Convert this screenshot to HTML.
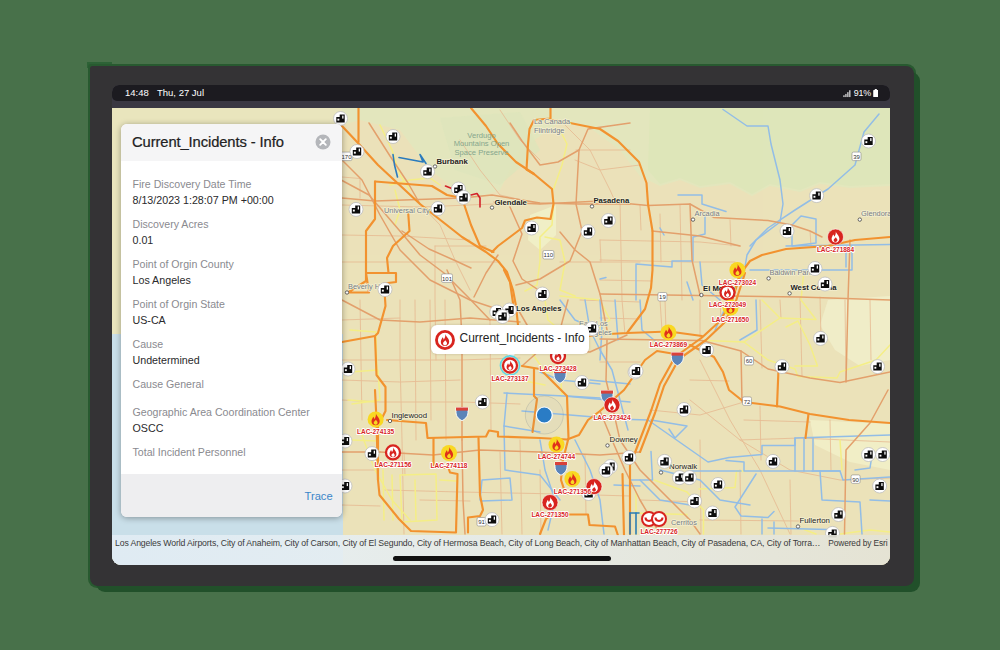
<!DOCTYPE html>
<html><head><meta charset="utf-8"><title>Current_Incidents - Info</title>
<style>
html,body{margin:0;padding:0}
body{width:1000px;height:650px;position:relative;overflow:hidden;background:#48714a;font-family:"Liberation Sans",sans-serif;}
.abs{position:absolute}
#box{left:87px;top:62px;width:848px;height:530px;background:#466e48}
#shadow{left:96px;top:72px;width:824px;height:519.7px;border-radius:3px 9px 9px 9px;background:#21502a}
#halo{left:88px;top:64px;width:828px;height:524px;border-radius:3px 9px 9px 9px;background:#285a30}
#halo2{left:87px;top:61.5px;width:25px;height:6px;background:#2d6236}
#frame{left:90.3px;top:66.3px;width:823.4px;height:519.5px;border-radius:2.5px 8px 8.5px 8px;background:#343335}
#screen{left:112px;top:85px;width:778px;height:480px;border-radius:7px 7px 9px 9px;overflow:hidden;background:#3a3842}
#status{left:0;top:0;width:778px;height:15.5px;background:#1c1b20;border-radius:7px 7px 5px 5px;color:#fff;font-size:9.5px;line-height:16px}
#map{left:0;top:23px;width:778px;height:457px;background:#ebe3bb;overflow:hidden}
#panel{left:8.5px;top:38.5px;width:221px;height:393px;border-radius:6px;background:#fff;box-shadow:0 1px 6px rgba(0,0,0,.35);overflow:hidden}
#phead{left:0;top:0;width:221px;height:37.5px;background:#f5f5f6}
#pfoot{left:0;top:350px;width:221px;height:43px;background:#eeeef0}
.lab{position:absolute;left:12px;font-size:10.6px;color:#8a8a8f;white-space:nowrap;line-height:13px}
.val{position:absolute;left:12px;font-size:10.7px;color:#2a2a2c;white-space:nowrap;line-height:13px}
#title{left:11.5px;top:9px;font-size:14.75px;line-height:18px;color:#222;white-space:nowrap;-webkit-text-stroke:0.22px #222;letter-spacing:-0.1px}
#callout{left:318.5px;top:240px;width:158px;height:28.5px;border-radius:6px;background:#fff;box-shadow:0 0 3px rgba(0,0,0,.18)}
#ctext{left:29px;top:6px;font-size:11.97px;line-height:15px;color:#222;white-space:nowrap}
#attr{left:0;top:450px;width:778px;height:30px;background:linear-gradient(90deg,rgba(225,236,244,.92) 0%,rgba(230,238,242,.9) 30%,rgba(228,227,214,.92) 100%)}
#atxt{left:3px;top:3px;font-size:8.7px;line-height:11px;color:#3a3a3a;white-space:nowrap;letter-spacing:-0.116px}
#esri{right:2.6px;top:3px;font-size:8.4px;line-height:11px;color:#3a3a3a;white-space:nowrap;letter-spacing:-0.12px}
#homebar{left:281px;top:471px;width:217.5px;height:4.5px;border-radius:3px;background:#111}
</style></head>
<body>

<div id="halo2" class="abs"></div><div id="halo" class="abs"></div><div id="shadow" class="abs"></div>
<div id="frame" class="abs"></div>
<div id="screen" class="abs">
  <div id="map" class="abs"><svg width="778" height="457" viewBox="112 108 778 457" style="position:absolute;left:0;top:0;font-family:'Liberation Sans',sans-serif"><defs>
<path id="flame" d="M0.3,-5.6 C1,-3 3.9,-1.6 3.9,1.7 C3.9,4.1 2.1,5.6 0,5.6 C-2.2,5.6 -3.9,4.1 -3.9,1.8 C-3.9,0 -2.9,-1 -2.3,-2.6 C-1.6,-1.8 -1.3,-1.2 -1.2,-0.2 C-0.2,-1.6 0.5,-3.4 0.3,-5.6 Z M0,5 C1.1,5 1.9,4.2 1.9,3.1 C1.9,1.9 0.9,1.5 0.3,0.3 C-0.4,1.4 -1.8,1.9 -1.8,3.2 C-1.8,4.2 -1,5 0,5 Z" fill-rule="evenodd"/>
<g id="mW"><circle r="7" fill="#fff" stroke="#d8241f" stroke-width="2.3"/><use href="#flame" fill="#d8241f" transform="scale(0.88)"/></g>
<g id="mY"><circle r="8" fill="#f9d822"/><use href="#flame" fill="#e0301c" transform="scale(1.05)"/></g>
<g id="mR"><circle r="8" fill="#d8241f" stroke="#fff" stroke-width="0.6"/><use href="#flame" fill="#fff" transform="scale(1.0)"/></g>
<g id="mW2"><circle r="7" fill="#fff" stroke="#d8241f" stroke-width="2"/><path d="M-3.5,-1.5 C-3.5,3 3.5,3 3.5,-1.5" fill="none" stroke="#d8241f" stroke-width="2"/></g>
<g id="fac"><circle r="7" fill="#fff" stroke="#bdbdbd" stroke-width="0.8"/><path d="M-4.2,4 V-1.4 L-0.8,-1.4 V-4 H4.2 V4 Z" fill="#0d0d0d"/><rect x="-3.1" y="0.2" width="1.9" height="1.9" fill="#fff"/><rect x="1.7" y="-2.9" width="1.3" height="3" fill="#fff"/></g>
<g id="ish"><path d="M-5,-5 H5 V-1 C5,3 2,5 0,6 C-2,5 -5,3 -5,-1 Z" fill="#5b84b8" stroke="#fff" stroke-width="0.8"/><rect x="-5" y="-5" width="10" height="2.6" fill="#d9413a"/></g>
</defs><rect x="112" y="108" width="778" height="457" fill="#ebe2b9"/><path d="M342,108 H890 V186 L850,188 L820,184 L800,192 L770,186 L752,196 L730,184 L700,188 L680,180 L660,186 L640,176 L620,150 L590,128 L560,122 L520,150 L500,190 L470,200 L430,170 L400,130 L360,120 L342,125 Z" fill="#e3e7bd"/><path d="M650,108 H890 V184 L850,186 L820,182 L800,190 L770,184 L752,194 L730,182 L700,186 L680,178 L660,184 L648,170 Z" fill="#dee6ba"/><path d="M440,118 L520,112 L540,150 L500,185 L455,170 Z" fill="#dde5bb" opacity=".8"/><path d="M828,300 L890,296 V360 L860,366 L835,350 L820,325 Z" fill="#f0edc8"/><path d="M810,420 L890,424 V470 L850,462 L815,445 Z" fill="#f1eec6"/><path d="M530,215 L556,205 L556,235 L540,250 L528,240 Z" fill="#f0efc6"/><path d="M112,334 L343,334 L343,565 L112,565 Z" fill="#c9dfe9"/><rect x="112" y="108" width="230" height="226" fill="#e9e5bd"/><g fill="none" stroke-linejoin="round" stroke-linecap="round"><g stroke="#e6b48c" stroke-width="0.9" opacity=".8"><polyline class="t" points="342,205 420,207 494,204" /><polyline class="t" points="342,235 400,236 470,240" /><polyline class="t" points="342,262 420,262 500,262" /><polyline class="t" points="400,300 400,360 402,440 404,534" /><polyline class="t" points="430,300 431,420" /><polyline class="t" points="342,360 460,360 520,358" /><polyline class="t" points="342,400 380,402 462,402 520,404" /><polyline class="t" points="385,490 460,492 560,494 630,496" /><polyline class="t" points="500,452 502,534" /><polyline class="t" points="520,440 522,534" /><polyline class="t" points="600,240 700,242 740,246" /><polyline class="t" points="600,260 690,262 735,262" /><polyline class="t" points="620,201 622,300 625,334" /><polyline class="t" points="680,205 682,300" /><polyline class="t" points="700,300 700,337" /><polyline class="t" points="760,300 762,368" /><polyline class="t" points="800,297 802,376" /><polyline class="t" points="845,300 846,382" /><polyline class="t" points="690,400 740,440 790,470 840,480 890,478" /><polyline class="t" points="700,360 730,420 760,470 790,534" /><polyline class="t" points="560,120 590,150 610,190 615,201" /><polyline class="t" points="575,160 600,170 640,165" /><polyline class="t" points="460,140 480,170 500,195 540,204" /><polyline class="t" points="420,204 440,225 455,260 470,290" /><polyline class="t" points="500,110 520,140 540,160" /><polyline class="t" points="650,410 700,415 744,402" /><polyline class="t" points="740,440 800,438 890,442" /><polyline class="t" points="660,300 662,330" /><polyline class="t" points="580,300 640,302" /><polyline class="t" points="435,246 435,300 436,360" /><polyline class="t" points="435,246 486,246" /><polyline class="t" points="576,150 630,150" /><polyline class="t" points="342,177 360,178.5 360,198" /><polyline class="t" points="342,320 400,318" /><polyline class="t" points="342,380 400,382 460,380" /><polyline class="t" points="360,300 362,420" /><polyline class="t" points="415,300 416,440" /><polyline class="t" points="445,300 446,440" /><polyline class="t" points="490,320 491,430" /><polyline class="t" points="342,470 376,470" /><polyline class="t" points="342,505 380,506" /><polyline class="t" points="500,330 560,332" /><polyline class="t" points="480,345 520,347" /><polyline class="t" points="590,262 640,262" /><polyline class="t" points="600,280 652,281" /><polyline class="t" points="600,318 640,319" /><polyline class="t" points="665,300 666,331" /><polyline class="t" points="720,300 721,321" /><polyline class="t" points="780,300 781,318" /><polyline class="t" points="820,297 821,338" /><polyline class="t" points="870,300 871,360" /><polyline class="t" points="600,362 640,362" /><polyline class="t" points="690,380 729,381" /><polyline class="t" points="744,420 810,422" /><polyline class="t" points="760,406 761,460" /><polyline class="t" points="830,420 831,470" /><polyline class="t" points="700,440 701,534" /><polyline class="t" points="740,470 741,534" /><polyline class="t" points="790,480 791,534" /><polyline class="t" points="640,500 700,502" /><polyline class="t" points="700,520 800,521" /><polyline class="t" points="540,470 541,534" /><polyline class="t" points="585,455 586,514" /><polyline class="t" points="420,500 470,501" /><polyline class="t" points="404,452 405,475" /><polyline class="t" points="660,214 661,262" /><polyline class="t" points="640,205 641,230" /><polyline class="t" points="730,220 731,246" /><polyline class="t" points="810,231 811,246" /><polyline class="t" points="560,262 600,262" /><polyline class="t" points="600,240 601,262" /></g><g stroke="#f4ee86" stroke-width="1.5"><polyline class="y" points="553.5,204 552,225 540,237 540,261 537,285 525,291" /><polyline class="y" points="553.5,189 562,165 567,144 560,130" /><polyline class="y" points="545,237 560,240 565,262 560,290 575,296" /><polyline class="y" points="380,125 392,150 400,175 410,190" /><polyline class="y" points="390,185 410,180 430,178 440,185" /><polyline class="y" points="395,190 400,210 395,225" /><polyline class="y" points="705,340.5 744,342 780,318 762,300" /><polyline class="y" points="744,342 768,360 795,369 798,376.5 837,378 840,372 876,360 890,345" /><polyline class="y" points="780,318 816,319.5 801,300 804,270" /><polyline class="y" points="786,327 798,321 810,345 817.5,366 795,366" /><polyline class="y" points="350,372 378,370 380,400 352,404" /><polyline class="y" points="360,430 375,470 392,500 410,520" /><polyline class="y" points="400,475 436,474 437,520 402,522 400,475" /><polyline class="y" points="415,480 416,520" /><polyline class="y" points="510,340 530,350 545,372 560,372" /><polyline class="y" points="520,380 545,385" /><polyline class="y" points="699,489 735,487.5 736.5,471 744,471" /><polyline class="y" points="636,492 636,534" /><polyline class="y" points="654,480 687,492 703.5,510 703.5,534" /><polyline class="y" points="630,513 687,514.5" /><polyline class="y" points="804,529.5 816,534" /><polyline class="y" points="560,296 600,300 610,320 590,334" /><polyline class="y" points="840,534 870,530 890,532" /><polyline class="y" points="350,330 376,332 377,375" /><polyline class="y" points="348,400 376,402" /><polyline class="y" points="352,440 378,441" /><polyline class="y" points="383,470 384,520" /><polyline class="y" points="392,475 393,520" /><polyline class="y" points="440,480 456,481" /><polyline class="y" points="520,345 534,346" /><polyline class="y" points="537,369 560,370 562,395" /><polyline class="y" points="545,300 548,320 560,330" /><polyline class="y" points="840,440 842,470" /></g><g stroke="#92bde6" stroke-width="1.5"><polyline class="b" points="723,109.5 747,126 768,126 771,144 780,180 783,204 780,222 756,240 747,255 744,273 729,300 715,330" /><polyline class="b" points="879,114 864,132 855,165 828,189 795,210 768,228 750,246" /><polyline class="b" points="678,195 702,195 702,204 726,211.5" /><polyline class="b" points="705,213 705,234 693,237 693,261 672,261 672,267 636,264 636,300" /><polyline class="b" points="792,246 792,225 801,216 816,219 816,243 792,246" /><polyline class="b" points="786,246 890,244.5" /><polyline class="b" points="750,270 852,270 852,246" /><polyline class="b" points="846,246 846,267" /><polyline class="b" points="600,279 606,277.5" /><polyline class="b" points="687,282 693,300" /><polyline class="b" points="660,228 664,235" /><polyline class="b" points="504,393 564,396 630,402" /><polyline class="b" points="507,393 504,426 540,432" /><polyline class="b" points="522,411 630,420" /><polyline class="b" points="540,372 560,380 600,384" /><polyline class="b" points="585,300 590,330 600,350 612,370 620,400 628,430" /><polyline class="b" points="560,300 575,320 598,330" /><polyline class="b" points="600,418.5 648,420 708,462 729,457.5 762,454.5 762,445.5 795,445.5 795,438 890,435" /><polyline class="b" points="795,438 795,471" /><polyline class="b" points="804,438 804,471" /><polyline class="b" points="813,438 813,471" /><polyline class="b" points="726,460.5 744,462 744,471 840,471 843,480 890,477" /><polyline class="b" points="690,471 741,471" /><polyline class="b" points="756,474 735,507 741,516 768,517.5 774,511.5" /><polyline class="b" points="762,519 762,534" /><polyline class="b" points="774,522 774,534" /><polyline class="b" points="768,528 828,529.5" /><polyline class="b" points="651,420 687,426 675,438 669,429" /><polyline class="b" points="651,451.5 652.5,480 630,480" /><polyline class="b" points="600,570 675,570" /><polyline class="b" points="540,440 545,470 555,500 548,530" /><polyline class="b" points="575,440 590,470 600,500 604,534" /><polyline class="b" points="480,500 482,480 510,478 512,500 481,501" /><polyline class="b" points="640,480 660,500 690,505" /><polyline class="b" points="855,470 870,468 872,455 890,456" /><polyline class="b" points="614,485 640,486" /><polyline class="b" points="600,300 602,330 600,360" /><polyline class="b" points="615,300 618,340" /><polyline class="b" points="504,426 505,470 540,475 560,500" /><polyline class="b" points="567,396 600,398" /><polyline class="b" points="590,380 630,384" /><polyline class="b" points="640,300 642,330 660,345" /><polyline class="b" points="700,262 702,285 720,300" /><polyline class="b" points="756,300 757,330 740,340" /><polyline class="b" points="660,470 700,480 720,500 750,505" /><polyline class="b" points="820,471 822,500 860,502 862,534" /><polyline class="b" points="870,500 890,501" /><polyline class="b" points="812,471 840,471" /></g><g stroke="#e3a06c" stroke-width="1.5"><polyline class="m" points="600,201 648,205.5 690,204 714,217.5 768,220.5 792,225 810,231 822,237" /><polyline class="m" points="494,202 540,204 600,201" /><polyline class="m" points="600,294 699,295.5 800,297 890,300" /><polyline class="m" points="600,339 702,340.5 741,351 768,369 810,378 840,382.5 890,372" /><polyline class="m" points="888,390 870,423 846,450 844.5,534" /><polyline class="m" points="342,160 362,180 380,215 400,250 430,280 470,300 500,310" /><polyline class="m" points="447,270 460,300 462,340 462,400 462,440" /><polyline class="m" points="380,452 433,455 480,450 540,452 562,460" /><polyline class="m" points="342,300 380,320 420,322 470,318 520,322" /><polyline class="m" points="560,232 575,250 590,262 600,294 607,330" /><polyline class="m" points="607,340 606,380 612,405 620,440 640,470 690,520 700,534" /><polyline class="m" points="516,306 530,330 560,350 590,352 627,335" /><polyline class="m" points="342,198 375,201 462,198 492,195 540,203 579,204 630,204" /><polyline class="m" points="330,174 369,195 405,237 420,255 444,273 468,297 490,320" /><polyline class="m" points="369,123 390,156 408,183 420,204" /><polyline class="m" points="510,207 522,234 513,261 522,279 540,291" /><polyline class="m" points="579,150 576,204 582,231 570,261 540,279 516,285" /><polyline class="m" points="510,123 522,141 540,165 558,162 579,150 588,129 630,123" /><polyline class="m" points="474,297 486,273 498,255" /><polyline class="m" points="402,231 429,249 456,261 471,268" /><polyline class="m" points="600,411 612,440 625,470 640,500 660,534" /><polyline class="m" points="652,231 700,236 740,246" /><polyline class="m" points="690,204 692,260 700,295" /><polyline class="m" points="342,452 380,452" /><polyline class="m" points="462,440 463,500 465,534" /><polyline class="m" points="540,452 600,455 640,452" /><polyline class="m" points="568,300 560,330 540,350 522,366" /><polyline class="m" points="741,351 742,402" /><polyline class="m" points="850,240 848,300 846,382" /></g><g stroke="#f2922f" stroke-width="2.15"><polyline class="o" points="342,126 358,143 378,165 420,204 462,237 486,252 498,261 507,272 513,290 516,306 518,325" /><polyline class="o" points="358.5,108 358.5,142" /><polyline class="o" points="471,108 486,126 498,144 516,162 534,174 552,189 553.5,204 550.5,219 537,217.5 525,220.5 522,228 510,237 498,246 492,252" /><polyline class="o" points="550.5,108 550.5,118.5 534,120 529.5,129 528,144 526.5,169.5 534,174" /><polyline class="o" points="552,120 570,123 600,129 618,141 639,162 646.5,183 648,204 652.5,231 652.5,270 651,288 645,309 627,333 600,334.5 575,338" /><polyline class="o" points="375,181.5 432,186 447,195 462,198 471,225 480,246 493.5,252" /><polyline class="o" points="375,181.5 375,219 366,231 366,273 369,292.5 348,292.5 366,281 366,273 396,273 396,282 384,283.5 385.5,306 378,333 375,336 376.5,375 385.5,387 385.5,411 378,426 378,480 379.5,495 399,519 411,531 456,532.5 457.5,474 450,472.5 448.5,468 433.5,466.5 433.5,438" /><polyline class="o" points="408,210 409.5,231 393,246 387,258 388.5,273" /><polyline class="o" points="342,342 375,336" /><polyline class="o" points="375,390 376.5,420 378,480" /><polyline class="o" points="387,420 426,423 427.5,438 486,436.5 489,430.5 498,432 498,436.5 540,438 567,439.5 579,435 588,420 600,411 624,390 645,360 657,351 675,354" /><polyline class="o" points="478.5,438 480,495 483,510 480,516 468,517.5 468,532.5" /><polyline class="o" points="522,366 540,369 567,396 568.5,438 562.5,462 561,480 564,489" /><polyline class="o" points="534,369 534,396 537,399 532.5,432" /><polyline class="o" points="504,270 510,282 513,303" /><polyline class="o" points="540,534 546,519 552,514.5 588,514.5 589.5,525 615,526.5 618,535.5" /><polyline class="o" points="622.5,474 624,535.5" /><polyline class="o" points="627,333 669,331.5 702,336" /><polyline class="o" points="741,270 732,300 720,321 702,337.5 675,357 660,384 651,411 636,450 630,465 630,534" /><polyline class="o" points="745,273 736,301 724,323 706,340 679,359 664,386 655,413 640,452" /><polyline class="o" points="732,300 741,273 750,261 762,255 786,249 828,246 855,240 890,237" /><polyline class="o" points="690,345 714,357 723,372 729,390 744,402 780,406.5 810,414 849,420 890,423" /><polyline class="o" points="778.5,369 777,406.5" /><polyline class="o" points="808.5,414 805.5,438" /></g><g stroke="#2a7bbd" stroke-width="1.6"><polyline class="d" points="393,154.5 394.5,165 397.5,177" /><polyline class="d" points="399,157.5 423,162 420,154.5 426,163.5" /><polyline class="d" points="630,513 630,534" /><polyline class="d" points="636,513 636,534" /><polyline class="d" points="630,513 639,513" /></g><g stroke="#d3222a" stroke-width="1.6"><polyline class="r" points="445.5,186 453,189 456,195" /><polyline class="r" points="471,195 477,193.5 480,198 480,207" /></g></g><g font-size="7.6" fill="#86a58c" text-anchor="middle"><text x="481.5" y="137.5">Verdugo</text><text x="481.5" y="146">Mountains Open</text><text x="481.5" y="154.5">Space Preserve</text></g><rect x="341" y="152.1" width="11" height="8.5" rx="1.5" fill="#fff" stroke="#888" stroke-width="0.6"/><text x="346.5" y="158.8" font-size="6" text-anchor="middle" fill="#333">170</text><rect x="441.5" y="273.9" width="11" height="8.5" rx="1.5" fill="#fff" stroke="#888" stroke-width="0.6"/><text x="447" y="280.6" font-size="6" text-anchor="middle" fill="#333">101</text><rect x="542.9" y="250.5" width="11" height="8.5" rx="1.5" fill="#fff" stroke="#888" stroke-width="0.6"/><text x="548.4" y="257.2" font-size="6" text-anchor="middle" fill="#333">110</text><rect x="852" y="152.1" width="9" height="8.5" rx="1.5" fill="#fff" stroke="#888" stroke-width="0.6"/><text x="856.5" y="158.8" font-size="6" text-anchor="middle" fill="#333">39</text><rect x="657.9" y="292.5" width="9" height="8.5" rx="1.5" fill="#fff" stroke="#888" stroke-width="0.6"/><text x="662.4" y="299.2" font-size="6" text-anchor="middle" fill="#333">19</text><rect x="744.5" y="356.5" width="9" height="8.5" rx="1.5" fill="#fff" stroke="#888" stroke-width="0.6"/><text x="749" y="363.2" font-size="6" text-anchor="middle" fill="#333">60</text><rect x="742.5" y="396.9" width="9" height="8.5" rx="1.5" fill="#fff" stroke="#888" stroke-width="0.6"/><text x="747" y="403.6" font-size="6" text-anchor="middle" fill="#333">72</text><rect x="477" y="517.5" width="9" height="8.5" rx="1.5" fill="#fff" stroke="#888" stroke-width="0.6"/><text x="481.5" y="524.2" font-size="6" text-anchor="middle" fill="#333">91</text><rect x="851.1" y="474.9" width="9" height="8.5" rx="1.5" fill="#fff" stroke="#888" stroke-width="0.6"/><text x="855.6" y="481.6" font-size="6" text-anchor="middle" fill="#333">90</text><use href="#ish" x="0" y="0" transform="translate(462,413.5) scale(1.2) translate(0,0)"/><use href="#ish" x="0" y="0" transform="translate(560,376) scale(1.2) translate(0,0)"/><use href="#ish" x="0" y="0" transform="translate(607,396.5) scale(1.2) translate(0,0)"/><use href="#ish" x="0" y="0" transform="translate(677.4,358.5) scale(1.2) translate(0,0)"/><use href="#ish" x="0" y="0" transform="translate(561,468) scale(1.2) translate(0,0)"/><circle cx="435" cy="166.5" r="1.7" fill="#fff" stroke="#444" stroke-width="0.8"/><circle cx="492" cy="207.6" r="1.7" fill="#fff" stroke="#444" stroke-width="0.8"/><circle cx="592" cy="206.4" r="1.7" fill="#fff" stroke="#444" stroke-width="0.8"/><circle cx="693" cy="219.6" r="1.7" fill="#fff" stroke="#444" stroke-width="0.8"/><circle cx="859.8" cy="219.6" r="1.7" fill="#fff" stroke="#444" stroke-width="0.8"/><circle cx="768.6" cy="278.4" r="1.7" fill="#fff" stroke="#444" stroke-width="0.8"/><circle cx="789.6" cy="293.4" r="1.7" fill="#fff" stroke="#444" stroke-width="0.8"/><circle cx="701.4" cy="295" r="1.7" fill="#fff" stroke="#444" stroke-width="0.8"/><circle cx="390" cy="421" r="1.7" fill="#fff" stroke="#444" stroke-width="0.8"/><circle cx="607.5" cy="445.5" r="1.7" fill="#fff" stroke="#444" stroke-width="0.8"/><circle cx="661" cy="472.5" r="1.7" fill="#fff" stroke="#444" stroke-width="0.8"/><circle cx="798" cy="526.5" r="1.7" fill="#fff" stroke="#444" stroke-width="0.8"/><circle cx="347" cy="292.5" r="1.7" fill="#fff" stroke="#444" stroke-width="0.8"/><text x="436.5" y="163.5" font-weight="bold" fill="#222" font-size="7.7" stroke="#f3eed0" stroke-width="1.6" paint-order="stroke" stroke-linejoin="round">Burbank</text><text x="494.4" y="204.6" font-weight="bold" fill="#222" font-size="7.7" stroke="#f3eed0" stroke-width="1.6" paint-order="stroke" stroke-linejoin="round">Glendale</text><text x="593.4" y="203.4" font-weight="bold" fill="#222" font-size="7.7" stroke="#f3eed0" stroke-width="1.6" paint-order="stroke" stroke-linejoin="round">Pasadena</text><text x="516" y="311" font-weight="bold" fill="#222" font-size="7.7" stroke="#f3eed0" stroke-width="1.6" paint-order="stroke" stroke-linejoin="round">Los Angeles</text><text x="703" y="291" font-weight="bold" fill="#222" font-size="7.7" stroke="#f3eed0" stroke-width="1.6" paint-order="stroke" stroke-linejoin="round">El Monte</text><text x="790.5" y="290" font-weight="bold" fill="#222" font-size="7.7" stroke="#f3eed0" stroke-width="1.6" paint-order="stroke" stroke-linejoin="round">West Covina</text><text x="391.5" y="418" fill="#222" font-size="7.8" stroke="#f3eed0" stroke-width="1.6" paint-order="stroke" stroke-linejoin="round">Inglewood</text><text x="609.6" y="441.5" fill="#222" font-size="7.8" stroke="#f3eed0" stroke-width="1.6" paint-order="stroke" stroke-linejoin="round">Downey</text><text x="669" y="469" fill="#222" font-size="7.8" stroke="#f3eed0" stroke-width="1.6" paint-order="stroke" stroke-linejoin="round">Norwalk</text><text x="799.5" y="523" fill="#222" font-size="7.8" stroke="#f3eed0" stroke-width="1.6" paint-order="stroke" stroke-linejoin="round">Fullerton</text><text x="694.5" y="216" fill="#777d86" font-size="7.4" stroke="#f3eed0" stroke-width="1.6" paint-order="stroke" stroke-linejoin="round">Arcadia</text><text x="861" y="216" fill="#777d86" font-size="7.4" stroke="#f3eed0" stroke-width="1.6" paint-order="stroke" stroke-linejoin="round">Glendora</text><text x="769.5" y="275" fill="#777d86" font-size="7.4" stroke="#f3eed0" stroke-width="1.6" paint-order="stroke" stroke-linejoin="round">Baldwin Park</text><text x="671" y="525" fill="#777d86" font-size="7.4" stroke="#f3eed0" stroke-width="1.6" paint-order="stroke" stroke-linejoin="round">Cerritos</text><text x="384" y="213" fill="#777d86" font-size="7.4" stroke="#f3eed0" stroke-width="1.6" paint-order="stroke" stroke-linejoin="round">Universal City</text><text x="348" y="289" fill="#777d86" font-size="7.4" stroke="#f3eed0" stroke-width="1.6" paint-order="stroke" stroke-linejoin="round">Beverly Hills</text><text x="579" y="326" fill="#777d86" font-size="7.4" stroke="#f3eed0" stroke-width="1.6" paint-order="stroke" stroke-linejoin="round">East Los</text><text x="585" y="335" fill="#777d86" font-size="7.4" stroke="#f3eed0" stroke-width="1.6" paint-order="stroke" stroke-linejoin="round">Angeles</text><text x="534" y="124" fill="#777d86" font-size="7.4" stroke="#f3eed0" stroke-width="1.6" paint-order="stroke" stroke-linejoin="round">La Canada</text><text x="534" y="133" fill="#777d86" font-size="7.4" stroke="#f3eed0" stroke-width="1.6" paint-order="stroke" stroke-linejoin="round">Flintridge</text><use href="#fac" x="340.5" y="118.5"/><use href="#fac" x="393" y="136.5"/><use href="#fac" x="357" y="151.5"/><use href="#fac" x="427.5" y="171.6"/><use href="#fac" x="458.4" y="189"/><use href="#fac" x="463.5" y="197.4"/><use href="#fac" x="438" y="208.5"/><use href="#fac" x="356" y="209.4"/><use href="#fac" x="531.6" y="228"/><use href="#fac" x="588" y="231.6"/><use href="#fac" x="608.4" y="220.5"/><use href="#fac" x="385" y="289.5"/><use href="#fac" x="542.4" y="294"/><use href="#fac" x="868.5" y="141"/><use href="#fac" x="816.6" y="195.6"/><use href="#fac" x="787" y="231"/><use href="#fac" x="815" y="268.5"/><use href="#fac" x="825" y="284"/><use href="#fac" x="348" y="369"/><use href="#fac" x="482.4" y="402"/><use href="#fac" x="372" y="453.6"/><use href="#fac" x="345" y="441"/><use href="#fac" x="345" y="486"/><use href="#fac" x="496.8" y="312"/><use href="#fac" x="509.4" y="310"/><use href="#fac" x="502.5" y="316.5"/><use href="#fac" x="582" y="382.5"/><use href="#fac" x="592" y="328.5"/><use href="#fac" x="635" y="372"/><use href="#fac" x="706.5" y="350"/><use href="#fac" x="636" y="371"/><use href="#fac" x="782" y="366.6"/><use href="#fac" x="820.5" y="338.4"/><use href="#fac" x="877.5" y="366.6"/><use href="#fac" x="684" y="409.5"/><use href="#fac" x="629" y="457.5"/><use href="#fac" x="664.5" y="461.4"/><use href="#fac" x="773" y="461.4"/><use href="#fac" x="868.5" y="454.5"/><use href="#fac" x="882.6" y="454.5"/><use href="#fac" x="492" y="519.6"/><use href="#fac" x="610.5" y="466.5"/><use href="#fac" x="606" y="470.4"/><use href="#fac" x="588.6" y="493.5"/><use href="#fac" x="679.5" y="477.6"/><use href="#fac" x="689.4" y="477.6"/><use href="#fac" x="718" y="484.5"/><use href="#fac" x="694.5" y="501"/><use href="#fac" x="712.5" y="513"/><use href="#fac" x="879.6" y="486"/><use href="#fac" x="838.5" y="514.5"/><use href="#fac" x="832.5" y="533.4"/><circle cx="544.3" cy="415" r="19" fill="rgba(120,160,200,.06)" stroke="rgba(120,130,140,.35)" stroke-width="0.7"/><circle cx="544.3" cy="415" r="8" fill="#2a7cc5" stroke="#fff" stroke-width="1.2"/><path d="M506,352 L516,352 L511,360 Z" fill="#fff"/><circle cx="510" cy="365.5" r="9.6" fill="none" stroke="#5fd7e6" stroke-width="1.6"/><use href="#mW" x="510" y="365.5"/><text x="510" y="381" font-size="6.5" font-weight="bold" fill="#d8241f" text-anchor="middle" stroke="#fff" stroke-width="1.8" paint-order="stroke" stroke-linejoin="round">LAC-273137</text><use href="#mY" x="375.6" y="419.4"/><use href="#mW" x="393" y="452.4"/><use href="#mY" x="449" y="453"/><use href="#mY" x="556.5" y="444.6"/><use href="#mY" x="572.4" y="479"/><use href="#mR" x="594" y="486.6"/><use href="#mR" x="550" y="502.5"/><use href="#mR" x="612" y="405"/><use href="#mW" x="558" y="356"/><use href="#mY" x="668.4" y="332.4"/><use href="#mY" x="737.4" y="270"/><use href="#mW" x="727.5" y="292.5"/><use href="#mY" x="730.5" y="307.5"/><use href="#mR" x="835.5" y="237"/><use href="#mW2" x="649" y="519"/><use href="#mW2" x="659" y="519"/><text x="375.6" y="434" font-size="6.5" font-weight="bold" fill="#d8241f" text-anchor="middle" stroke="#fff" stroke-width="1.8" paint-order="stroke" stroke-linejoin="round">LAC-274135</text><text x="393" y="467" font-size="6.5" font-weight="bold" fill="#d8241f" text-anchor="middle" stroke="#fff" stroke-width="1.8" paint-order="stroke" stroke-linejoin="round">LAC-271156</text><text x="449" y="467.6" font-size="6.5" font-weight="bold" fill="#d8241f" text-anchor="middle" stroke="#fff" stroke-width="1.8" paint-order="stroke" stroke-linejoin="round">LAC-274118</text><text x="556.5" y="459.2" font-size="6.5" font-weight="bold" fill="#d8241f" text-anchor="middle" stroke="#fff" stroke-width="1.8" paint-order="stroke" stroke-linejoin="round">LAC-274744</text><text x="572.4" y="493.6" font-size="6.5" font-weight="bold" fill="#d8241f" text-anchor="middle" stroke="#fff" stroke-width="1.8" paint-order="stroke" stroke-linejoin="round">LAC-271356</text><text x="550" y="517.1" font-size="6.5" font-weight="bold" fill="#d8241f" text-anchor="middle" stroke="#fff" stroke-width="1.8" paint-order="stroke" stroke-linejoin="round">LAC-271350</text><text x="612" y="419.6" font-size="6.5" font-weight="bold" fill="#d8241f" text-anchor="middle" stroke="#fff" stroke-width="1.8" paint-order="stroke" stroke-linejoin="round">LAC-273424</text><text x="558" y="370.6" font-size="6.5" font-weight="bold" fill="#d8241f" text-anchor="middle" stroke="#fff" stroke-width="1.8" paint-order="stroke" stroke-linejoin="round">LAC-273428</text><text x="668.4" y="347" font-size="6.5" font-weight="bold" fill="#d8241f" text-anchor="middle" stroke="#fff" stroke-width="1.8" paint-order="stroke" stroke-linejoin="round">LAC-273869</text><text x="737.4" y="284.6" font-size="6.5" font-weight="bold" fill="#d8241f" text-anchor="middle" stroke="#fff" stroke-width="1.8" paint-order="stroke" stroke-linejoin="round">LAC-273024</text><text x="727.5" y="307.1" font-size="6.5" font-weight="bold" fill="#d8241f" text-anchor="middle" stroke="#fff" stroke-width="1.8" paint-order="stroke" stroke-linejoin="round">LAC-272049</text><text x="730.5" y="322.1" font-size="6.5" font-weight="bold" fill="#d8241f" text-anchor="middle" stroke="#fff" stroke-width="1.8" paint-order="stroke" stroke-linejoin="round">LAC-271650</text><text x="835.5" y="251.6" font-size="6.5" font-weight="bold" fill="#d8241f" text-anchor="middle" stroke="#fff" stroke-width="1.8" paint-order="stroke" stroke-linejoin="round">LAC-271884</text><text x="659" y="533.6" font-size="6.5" font-weight="bold" fill="#d8241f" text-anchor="middle" stroke="#fff" stroke-width="1.8" paint-order="stroke" stroke-linejoin="round">LAC-277726</text></svg></div>
  <div id="status" class="abs">
    <span class="abs" style="left:13px;top:0">14:48</span>
    <span class="abs" style="left:45px;top:0;white-space:nowrap">Thu, 27 Jul</span>
    <svg class="abs" style="left:730.5px;top:3.5px" width="8" height="9" viewBox="0 0 9 9"><rect x="0.5" y="6.5" width="1.2" height="2" fill="#fff"/><rect x="2.7" y="5" width="1.2" height="3.5" fill="#fff"/><rect x="4.9" y="3" width="1.2" height="5.5" fill="#fff"/><rect x="7.1" y="0.8" width="1.2" height="7.7" fill="#fff"/></svg>
    <span class="abs" style="left:741.8px;top:0;font-size:8.9px;letter-spacing:-0.2px">91%</span>
    <svg class="abs" style="left:760.6px;top:3.6px" width="5.6" height="8.6" viewBox="0 0 6 10"><rect x="1.8" y="0" width="2.4" height="1.5" fill="#fff"/><rect x="0" y="1.2" width="6" height="8.3" rx="0.8" fill="#fff"/></svg>
  </div>
  <div id="attr" class="abs">
    <div id="atxt" class="abs">Los Angeles World Airports, City of Anaheim, City of Carson, City of El Segundo, City of Hermosa Beach, City of Long Beach, City of Manhattan Beach, City of Pasadena, CA, City of Torra&hellip;</div>
    <div id="esri" class="abs">Powered by Esri</div>
  </div>
  <div id="homebar" class="abs"></div>
  <div id="callout" class="abs">
    <svg class="abs" style="left:4.5px;top:4.5px" width="20" height="20" viewBox="-10 -10 20 20"><use href="#mW" transform="scale(1.22)"/></svg>
    <div id="ctext" class="abs">Current_Incidents - Info</div>
  </div>
  <div id="panel" class="abs">
    <div id="phead" class="abs"></div>
    <div id="pfoot" class="abs"></div>
    <div id="title" class="abs">Current_Incidents - Info</div>
    <svg class="abs" style="left:194.5px;top:10.5px" width="16" height="16" viewBox="0 0 16 16"><circle cx="8" cy="8" r="7.5" fill="#b4b6ba"/><path d="M5.2 5.2L10.8 10.8M10.8 5.2L5.2 10.8" stroke="#fff" stroke-width="1.9" stroke-linecap="round"/></svg>
    <div class="lab" style="top:54.0px">Fire Discovery Date Time</div>
    <div class="val" style="top:70.0px">8/13/2023 1:28:07 PM +00:00</div>
    <div class="lab" style="top:94.0px">Discovery Acres</div>
    <div class="val" style="top:110.0px">0.01</div>
    <div class="lab" style="top:134.0px">Point of Orgin County</div>
    <div class="val" style="top:150.0px">Los Angeles</div>
    <div class="lab" style="top:174.0px">Point of Orgin State</div>
    <div class="val" style="top:190.0px">US-CA</div>
    <div class="lab" style="top:214.0px">Cause</div>
    <div class="val" style="top:230.0px">Undetermined</div>
    <div class="lab" style="top:254.0px">Cause General</div>
    <div class="lab" style="top:282px">Geographic Area Coordination Center</div>
    <div class="val" style="top:298px">OSCC</div>
    <div class="lab" style="top:322px">Total Incident Personnel</div>
    <div class="abs" style="left:184px;top:366px;font-size:11.2px;line-height:13px;color:#3b86c9">Trace</div>
  </div>
</div>
</body></html>
